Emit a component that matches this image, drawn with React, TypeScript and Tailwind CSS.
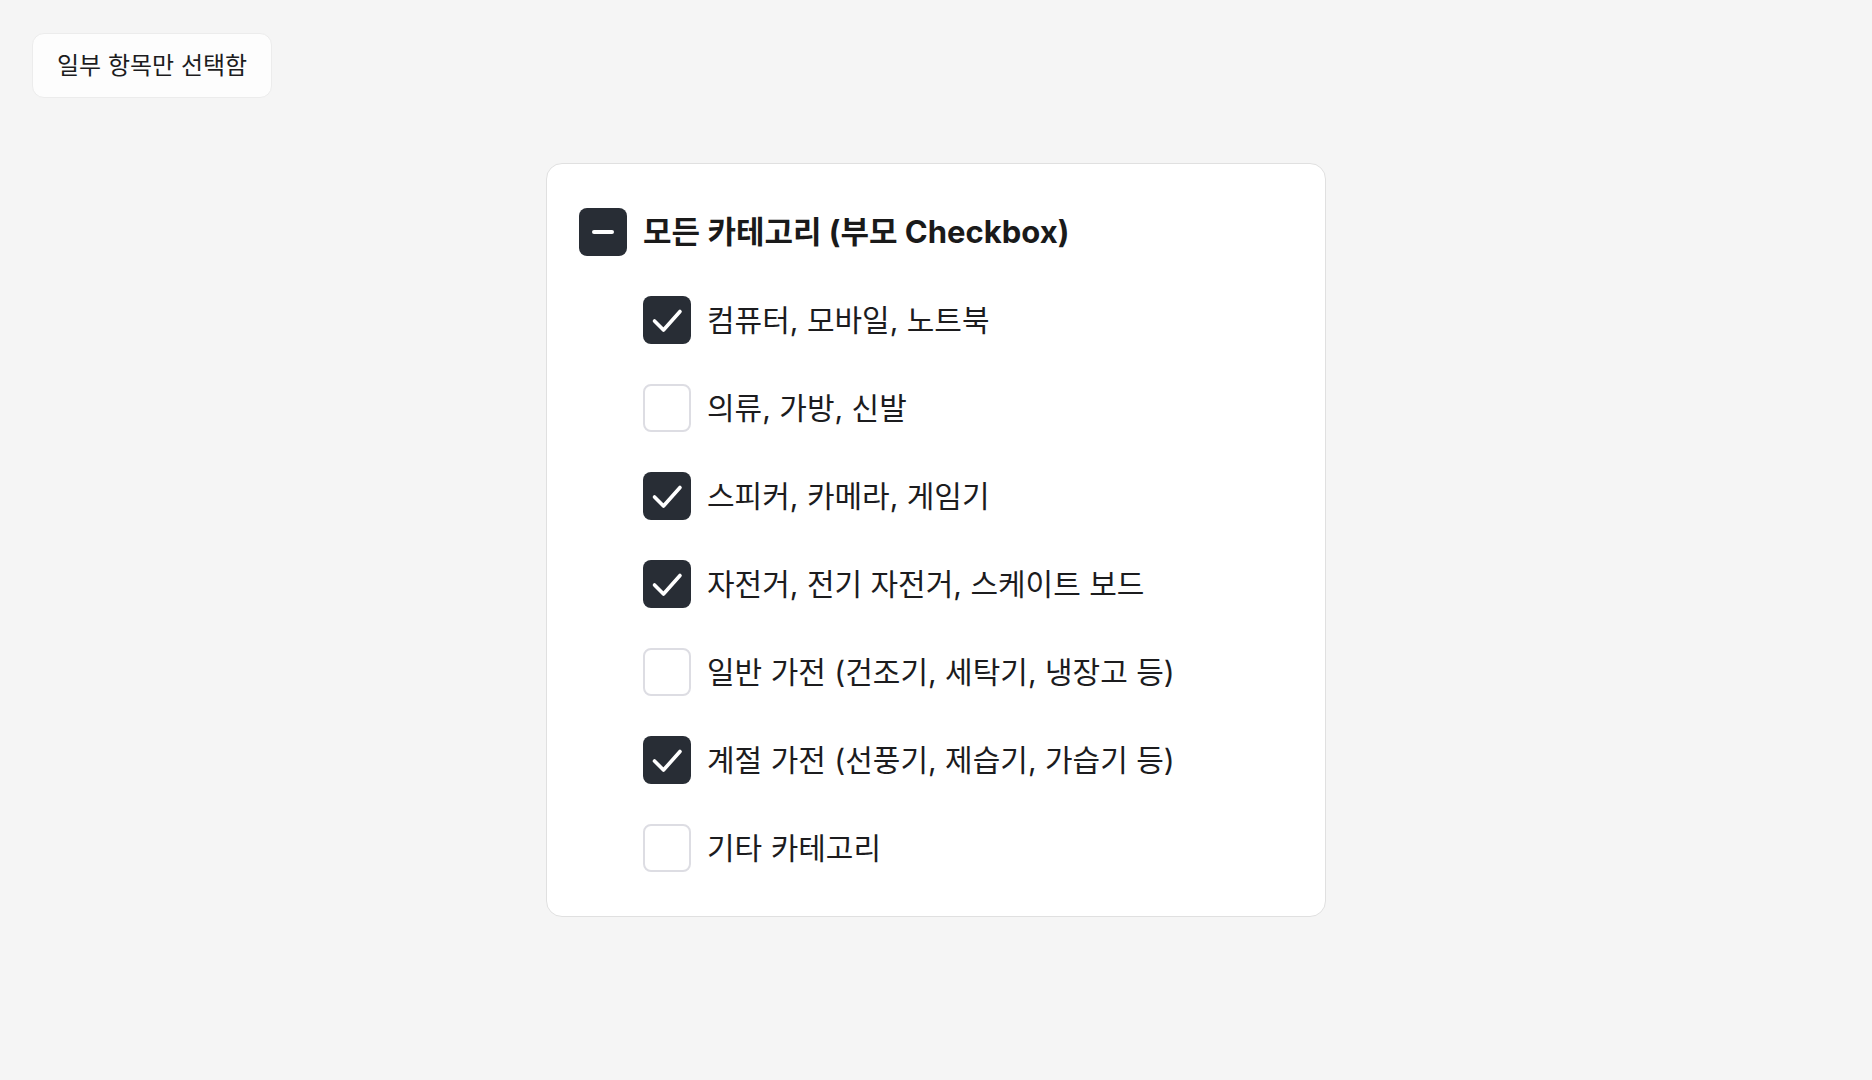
import React, { useState } from 'react';

const categories = [
  '컴퓨터, 모바일, 노트북',
  '의류, 가방, 신발',
  '스피커, 카메라, 게임기',
  '자전거, 전기 자전거, 스케이트 보드',
  '일반 가전 (건조기, 세탁기, 냉장고 등)',
  '계절 가전 (선풍기, 제습기, 가습기 등)',
  '기타 카테고리',
];

const fontStack = { fontFamily: 'Inter, "Noto Sans CJK KR", sans-serif' };

const Box: React.FC<{ state: 'on' | 'off' | 'mixed' }> = ({ state }) => {
  if (state === 'off') {
    return <span className="w-12 h-12 shrink-0 rounded-lg border-2 border-[#dddde3] bg-white" />;
  }
  return (
    <span className="w-12 h-12 shrink-0 rounded-lg bg-[#282d35] flex items-center justify-center">
      {state === 'on' ? (
        <svg width="48" height="48" viewBox="0 0 48 48" fill="none">
          <polyline
            points="11.5,25 20.5,34 37,15.5"
            stroke="#fff"
            strokeWidth="3.6"
            strokeLinecap="round"
            strokeLinejoin="round"
          />
        </svg>
      ) : (
        <span className="w-[22px] h-1 rounded-full bg-white" />
      )}
    </span>
  );
};

export default function App() {
  const [checked, setChecked] = useState<boolean[]>([true, false, true, true, false, true, false]);
  const count = checked.filter(Boolean).length;
  const parent = count === 0 ? 'off' : count === checked.length ? 'on' : 'mixed';

  const toggleAll = () => setChecked(checked.map(() => parent !== 'on'));
  const toggle = (i: number) => setChecked(checked.map((c, j) => (j === i ? !c : c)));

  return (
    <div className="min-h-screen bg-[#f5f5f5] px-8 pt-[33px] pb-8 text-[#1c1c1e]" style={fontStack}>
      <div className="inline-flex items-center rounded-xl border border-[#ececec] bg-[#fdfdfd] px-6 py-4 text-[24px] leading-[31px]">
        일부 항목만 선택함
      </div>

      <div className="mx-auto mt-[65px] w-[780px] rounded-2xl border border-[#e0e0e0] bg-white px-8 pt-[34px] pb-[34px]">
        <div className="flex flex-col gap-5">
          <button onClick={toggleAll} className="flex items-center gap-4 py-[10px] text-left">
            <Box state={parent} />
            <span className="text-[31px] font-bold leading-[40px] text-[#1a1a1a]">
              모든 카테고리 (부모 Checkbox)
            </span>
          </button>
          {categories.map((label, i) => (
            <button key={label} onClick={() => toggle(i)} className="flex items-center gap-4 py-[10px] pl-16 text-left">
              <Box state={checked[i] ? 'on' : 'off'} />
              <span className="text-[30px] leading-[40px] text-[#1c1c1e]">{label}</span>
            </button>
          ))}
        </div>
      </div>
    </div>
  );
}
